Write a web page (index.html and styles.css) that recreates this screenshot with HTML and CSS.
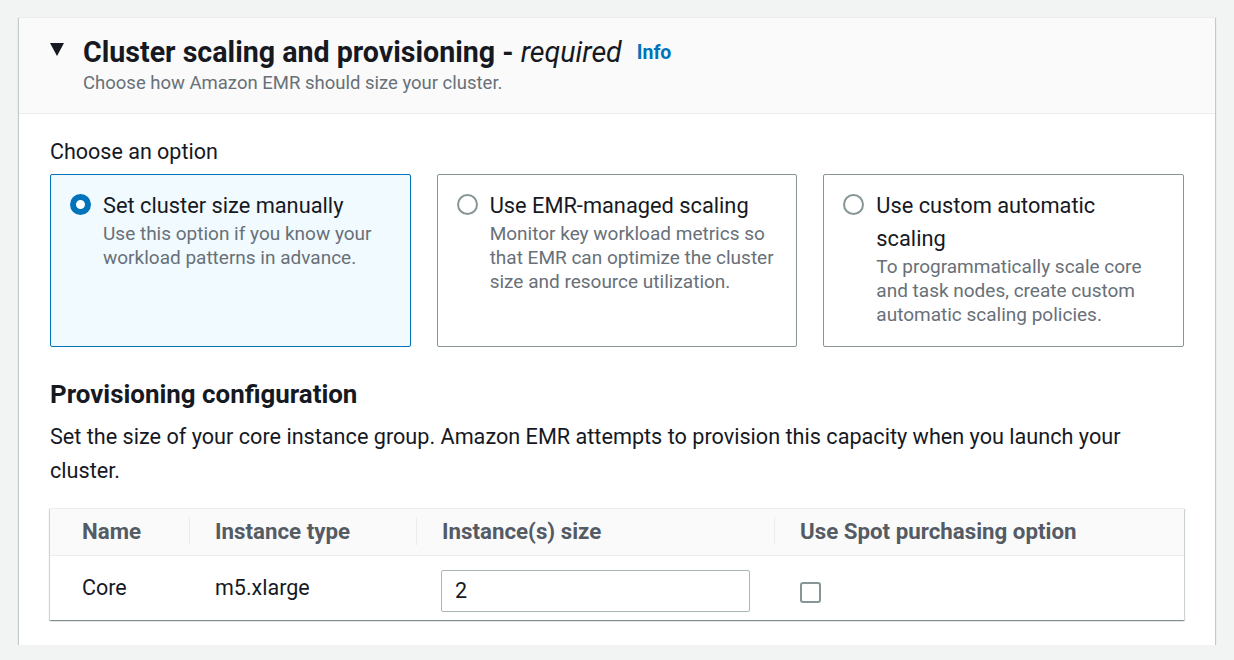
FILE: index.html
```html
<!DOCTYPE html>
<html lang="en">
<head>
<meta charset="utf-8">
<title>Cluster scaling and provisioning</title>
<link rel="stylesheet" href="styles.css">
</head>
<body>
<div class="container">
  <div class="header">
    <div class="title-row">
      <svg class="caret" width="14" height="13" viewBox="0 0 14 13"><polygon points="0,0 14,0 7,13"/></svg>
      <h2 class="title">Cluster scaling and provisioning - <i>required</i></h2>
      <a class="info" href="#">Info</a>
    </div>
    <p class="subtitle">Choose how Amazon EMR should size your cluster.</p>
  </div>
  <div class="content">
    <div class="label">Choose an option</div>
    <div class="tiles">
      <div class="tile selected">
        <span class="radio checked"></span>
        <div class="tile-text">
          <div class="tile-title">Set cluster size manually</div>
          <div class="tile-desc">Use this option if you know your workload patterns in advance.</div>
        </div>
      </div>
      <div class="tile">
        <span class="radio"></span>
        <div class="tile-text">
          <div class="tile-title">Use EMR-managed scaling</div>
          <div class="tile-desc">Monitor key workload metrics so that EMR can optimize the cluster size and resource utilization.</div>
        </div>
      </div>
      <div class="tile">
        <span class="radio"></span>
        <div class="tile-text">
          <div class="tile-title">Use custom automatic scaling</div>
          <div class="tile-desc">To programmatically scale core and task nodes, create custom automatic scaling policies.</div>
        </div>
      </div>
    </div>
    <h3 class="section-title">Provisioning configuration</h3>
    <p class="para">Set the size of your core instance group. Amazon EMR attempts to provision this capacity when you launch your cluster.</p>
    <div class="table">
      <div class="th first"><span>Name</span></div>
      <div class="th"><span>Instance type</span></div>
      <div class="th"><span>Instance(s) size</span></div>
      <div class="th"><span>Use Spot purchasing option</span></div>
      <div class="td first text">Core</div>
      <div class="td text">m5.xlarge</div>
      <div class="td field"><div class="input">2</div></div>
      <div class="td check"><span class="checkbox"></span></div>
    </div>
  </div>
</div>
</body>
</html>
```
FILE: styles.css
```css
* { box-sizing: border-box; }

body {
  margin: 0;
  padding: 17px 0 0 19px;
  background: #f2f3f3;
  font-family: Roboto, "Liberation Sans", Arial, sans-serif;
  color: #16191f;
}

.container {
  width: 1196px;
  background: #ffffff;
  border-top: 1px solid #eaeded;
  box-shadow: 0 1px 1px 0 rgba(0, 28, 36, 0.3), 1px 1px 1px 0 rgba(0, 28, 36, 0.15), -1px 1px 1px 0 rgba(0, 28, 36, 0.15);
}

.header {
  background: #fafafa;
  border-bottom: 1px solid #eaeded;
  padding: 16px 31px 17px 31px;
}

.title-row {
  display: flex;
  align-items: flex-start;
  height: 36px;
}

.caret {
  flex: none;
  margin-top: 9px;
  margin-right: 19px;
  fill: #16191f;
}

.title {
  margin: 0;
  font-size: 28.6px;
  line-height: 36px;
  font-weight: 700;
  color: #16191f;
}

.title i {
  font-weight: 400;
}

.info {
  margin-left: 15px;
  font-size: 19.5px;
  line-height: 38px;
  font-weight: 700;
  color: #0073bb;
  text-decoration: none;
}

.subtitle {
  margin: 0;
  padding-left: 33px;
  font-size: 18.5px;
  line-height: 26px;
  color: #687078;
}

.content {
  padding: 24px 31px 25px 31px;
}

.label {
  font-size: 21.5px;
  line-height: 28px;
  color: #16191f;
}

.tiles {
  margin-top: 8px;
  display: grid;
  grid-template-columns: 1fr 1fr 1fr;
  column-gap: 26px;
}

.tile {
  display: flex;
  gap: 12px;
  border: 1px solid #879596;
  border-radius: 2px;
  padding: 14px 20px 19px 19px;
  background: #ffffff;
}

.tile.selected {
  border-color: #0073bb;
  background: #f1faff;
}

.radio {
  flex: none;
  width: 21px;
  height: 21px;
  margin-top: 5px;
  border-radius: 50%;
  border: 2px solid #879596;
  background: #ffffff;
}

.radio.checked {
  border: 6px solid #0073bb;
}

.tile-title {
  font-size: 21.8px;
  line-height: 33px;
  color: #16191f;
}

.tile-desc {
  font-size: 19px;
  line-height: 24px;
  color: #687078;
}

.section-title {
  margin: 31px 0 0 0;
  font-size: 25.9px;
  line-height: 32px;
  font-weight: 700;
  color: #16191f;
}

.para {
  margin: 10px 0 0 0;
  font-size: 21.65px;
  line-height: 34px;
  color: #16191f;
}

.table {
  margin-top: 20px;
  display: grid;
  grid-template-columns: 139px 227px 358px 1fr;
  border-top: 1px solid #eaeded;
  box-shadow: 0 1px 1px 0 rgba(0, 28, 36, 0.3), 1px 1px 1px 0 rgba(0, 28, 36, 0.15), -1px 1px 1px 0 rgba(0, 28, 36, 0.15);
  background: #ffffff;
}

.th {
  background: #fafafa;
  border-bottom: 1px solid #eaeded;
  padding: 8px 0 10px 0;
  font-size: 22.3px;
  line-height: 28px;
  font-weight: 700;
  color: #545b64;
}

.th span {
  display: block;
  border-left: 1px solid #eaeded;
  padding-left: 25px;
}

.th.first span {
  border-left: none;
  padding-left: 32px;
}

.td {
  height: 64px;
  font-size: 21.5px;
  line-height: 28px;
  color: #16191f;
}

.td.text {
  padding: 18px 0 0 26px;
}

.td.first {
  padding-left: 32px;
}

.td.field {
  padding: 14px 0 0 25px;
}

.input {
  width: 309px;
  height: 42px;
  border: 1px solid #aab7b8;
  border-radius: 2px;
  padding: 0 13px;
  display: flex;
  align-items: center;
  font-size: 21.5px;
  color: #16191f;
}

.td.check {
  padding: 26px 0 0 26px;
}

.checkbox {
  display: block;
  width: 21px;
  height: 21px;
  border: 2px solid #879596;
  border-radius: 3px;
  background: #ffffff;
}
```
